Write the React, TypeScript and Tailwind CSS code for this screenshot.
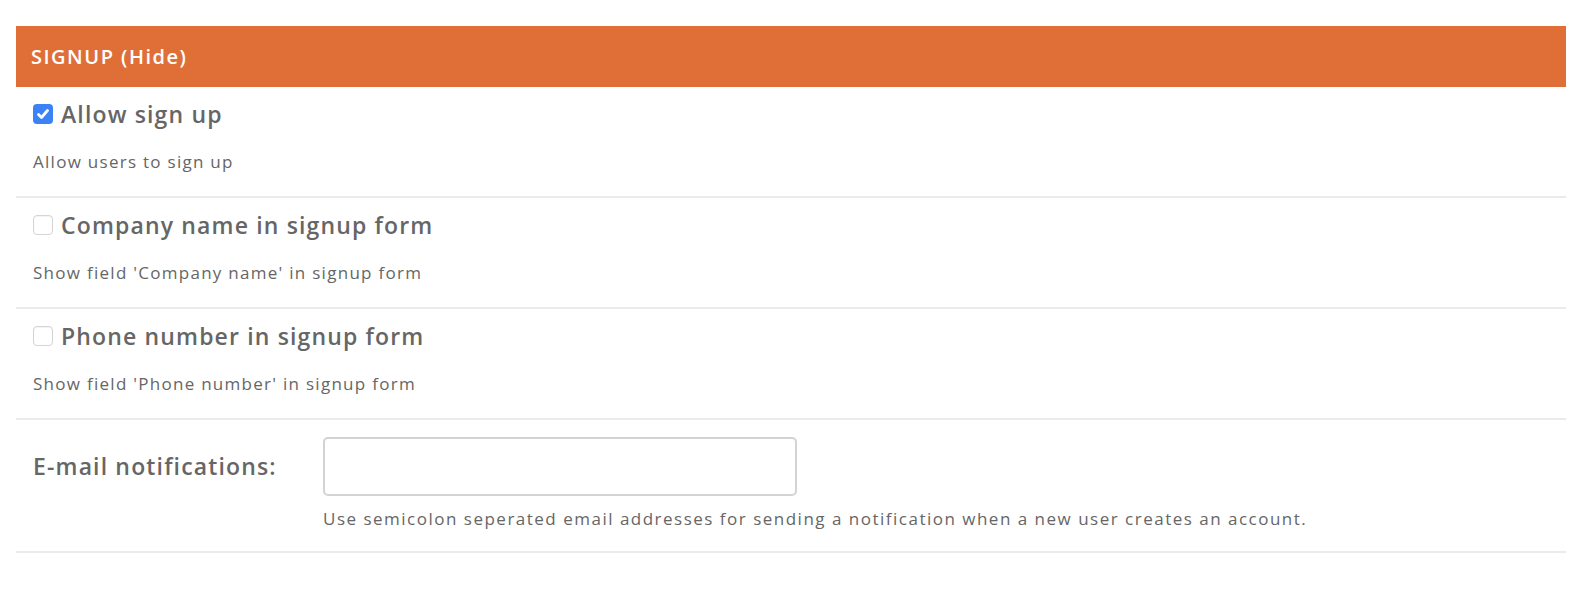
import React from 'react';

const font = { fontFamily: '"Open Sans", "Noto Sans", sans-serif' };

const Check = ({ checked }: { checked: boolean }) =>
  checked ? (
    <span className="flex h-[20px] w-[20px] shrink-0 items-center justify-center rounded-[4px] bg-[#3a82f6]">
      <svg viewBox="0 0 16 16" className="h-[16px] w-[16px]" fill="none" stroke="white" strokeWidth="2.8" strokeLinecap="round" strokeLinejoin="round">
        <path d="M3.5 8.5l3 3 6-7" />
      </svg>
    </span>
  ) : (
    <span className="h-[20px] w-[20px] shrink-0 rounded-[4px] border border-[#d4d4d4] bg-white shadow-[inset_0_1px_1px_rgba(0,0,0,0.05)]" />
  );

const rows = [
  { label: 'Allow sign up', desc: 'Allow users to sign up', checked: true },
  { label: 'Company name in signup form', desc: "Show field 'Company name' in signup form", checked: false },
  { label: 'Phone number in signup form', desc: "Show field 'Phone number' in signup form", checked: false },
];

const App = () => {
  return (
    <div className="min-h-[592px] bg-white px-4 pt-[26px]" style={font}>
      <div className="flex h-[61px] items-center bg-[#e06f37] px-[15px]">
        <span className="text-[20px] font-semibold tracking-[0.075em] text-white">SIGNUP (Hide)</span>
      </div>

      {rows.map((r) => (
        <div key={r.label} className="border-b-2 border-[#ebebeb] pb-[22px] pl-[17px] pt-[13px]">
          <label className="flex h-[28px] items-center gap-[8px]">
            <Check checked={r.checked} />
            <span className="text-[23px] font-semibold tracking-[0.05em] text-[#666]">{r.label}</span>
          </label>
          <p className="mt-[22px] h-[24px] text-[17px] leading-[24px] tracking-[0.075em] text-[#666]">{r.desc}</p>
        </div>
      ))}

      <div className="flex border-b-2 border-[#ebebeb] pb-[20px] pl-[17px] pt-[17px]">
        <div className="flex h-[59px] w-[290px] items-center">
          <span className="text-[23px] font-semibold tracking-[0.05em] text-[#666]">E-mail notifications:</span>
        </div>
        <div>
          <input type="text" className="block h-[59px] w-[474px] rounded-[5px] border-2 border-[#d3d3d3] bg-white outline-none" />
          <p className="mt-[11px] text-[17px] leading-[24px] tracking-[0.088em] text-[#666]">
            Use semicolon seperated email addresses for sending a notification when a new user creates an account.
          </p>
        </div>
      </div>
    </div>
  );
};

export default App;
